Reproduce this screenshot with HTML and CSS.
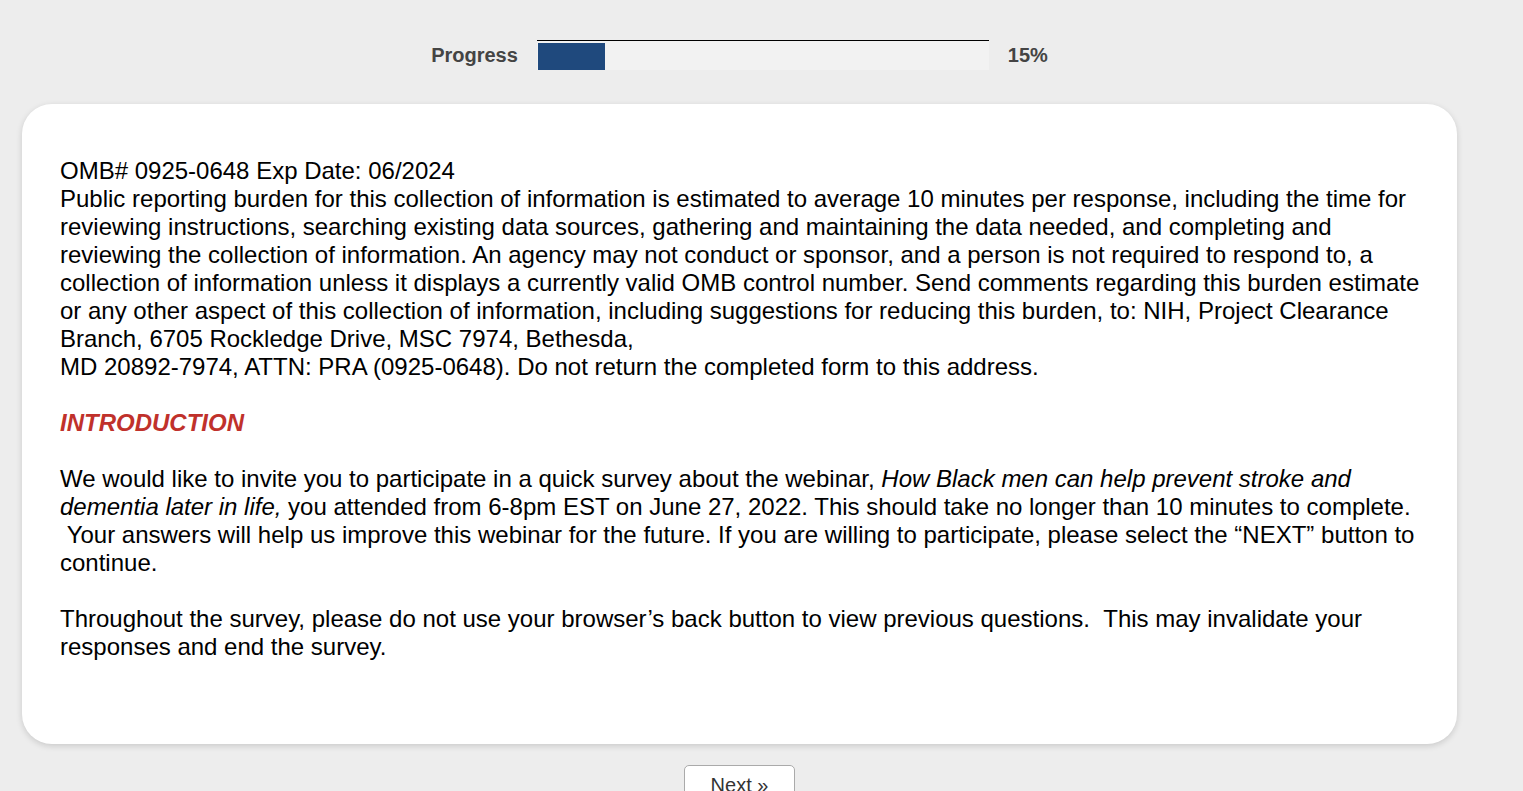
FILE: index.html
```html
<!DOCTYPE html>
<html lang="en">
<head>
    <meta charset="UTF-8">
    <meta name="viewport" content="width=device-width, initial-scale=1.0">
    <title>Survey</title>
    <link rel="stylesheet" href="styles.css">
</head>
<body>
    <div class="progress-row">
        <span class="progress-label">Progress</span>
        <div class="progress-bar">
            <div class="progress-fill" style="width: 15%"></div>
        </div>
        <span class="progress-value">15%</span>
    </div>

    <div class="card">
        <p>OMB# 0925-0648 Exp Date: 06/2024<br>
        Public reporting burden for this collection of information is estimated to average 10 minutes per response, including the time for reviewing instructions, searching existing data sources, gathering and maintaining the data needed, and completing and reviewing the collection of information. An agency may not conduct or sponsor, and a person is not required to respond to, a collection of information unless it displays a currently valid OMB control number. Send comments regarding this burden estimate or any other aspect of this collection of information, including suggestions for reducing this burden, to: NIH, Project Clearance Branch, 6705 Rockledge Drive, MSC 7974, Bethesda,<br>
        MD 20892-7974, ATTN: PRA (0925-0648). Do not return the completed form to this address.</p>

        <p class="heading">INTRODUCTION</p>

        <p>We would like to invite you to participate in a quick survey about the webinar, <em>How Black men can help prevent stroke and dementia later in life,</em> you attended from 6-8pm EST on June 27, 2022. This should take no longer than 10 minutes to complete. &nbsp;Your answers will help us improve this webinar for the future. If you are willing to participate, please select the &ldquo;NEXT&rdquo; button to continue.</p>

        <p>Throughout the survey, please do not use your browser&rsquo;s back button to view previous questions. &nbsp;This may invalidate your responses and end the survey.</p>
    </div>

    <div class="nav">
        <button class="next">Next &raquo;</button>
    </div>
</body>
</html>
```

FILE: styles.css
```css
body {
    margin: 0;
    background-color: #ededed;
    font-family: "Liberation Sans", Arial, sans-serif;
    color: #000;
}
.progress-row {
    display: flex;
    align-items: center;
    justify-content: center;
    gap: 19px;
    padding-top: 40px;
    margin-right: 44px;
}
.progress-label,
.progress-value {
    font-size: 20px;
    font-weight: bold;
    color: #444;
}
.progress-bar {
    width: 452px;
    height: 30px;
    box-sizing: border-box;
    border-top: 1px solid #000;
    background-color: #f2f2f2;
    padding: 2px 0 0 1px;
}
.progress-fill {
    height: 27px;
    background-color: #1f497d;
}
.card {
    width: 1435px;
    box-sizing: border-box;
    margin: 34px 0 0 22px;
    padding: 53px 30px 83px 38px;
    background-color: #fff;
    border-radius: 30px;
    box-shadow: 0 2px 6px rgba(0, 0, 0, 0.15);
    font-size: 24px;
    line-height: 28px;
}
.card p {
    margin: 0 0 28px 0;
}
.card p:last-child {
    margin-bottom: 0;
}
.card .heading {
    color: #c0312b;
    font-weight: bold;
    font-style: italic;
}
.nav {
    display: flex;
    justify-content: center;
    padding-top: 21px;
    margin-left: -44px;
}
.next {
    width: 111px;
    height: 40px;
    font-family: "Liberation Sans", Arial, sans-serif;
    font-size: 20px;
    color: #333;
    background-color: #fff;
    border: 1px solid #aaa;
    border-radius: 5px;
    cursor: pointer;
}
```
